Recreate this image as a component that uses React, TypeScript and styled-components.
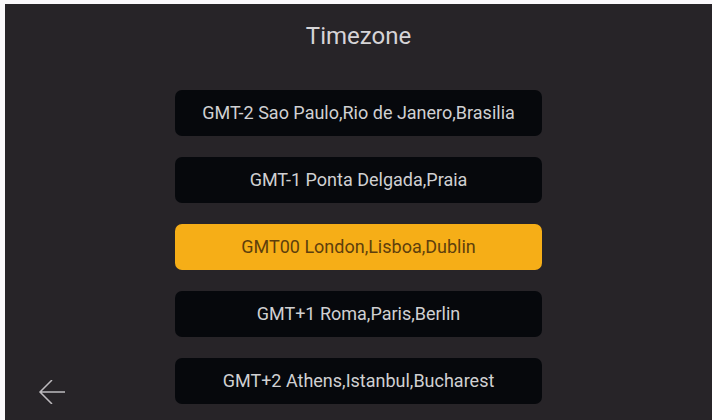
import React, { useState } from 'react';
import styled, { createGlobalStyle } from 'styled-components';

const GlobalStyle = createGlobalStyle`
  *, *::before, *::after { box-sizing: border-box; }
  body { margin: 0; background: #fbf9fc; }
`;

const Page = styled.div`
  min-height: 100vh;
  padding: 4px 0 0 5px;
  display: flex;
`;

const Screen = styled.main`
  flex: 1;
  display: grid;
  grid-template-columns: 1fr minmax(0, 52%) 1fr;
  grid-template-rows: auto 1fr;
  row-gap: 38px;
  padding: 16px 0;
  background: #272428;
  color: #d6d4d7;
  font-family: Roboto, 'Liberation Sans', sans-serif;
`;

const Title = styled.h1`
  grid-column: 1 / -1;
  margin: 0;
  text-align: center;
  font-size: 24px;
  line-height: 32px;
  font-weight: 400;
`;

const ZoneList = styled.ul`
  grid-column: 2;
  margin: 0;
  padding: 0;
  list-style: none;
  display: flex;
  flex-direction: column;
  gap: 21px;
`;

const ZoneButton = styled.button<{ $selected: boolean }>`
  display: block;
  width: 100%;
  padding: 11px 8px;
  border: 0;
  border-radius: 7px;
  background: ${({ $selected }) => ($selected ? '#f6ae17' : '#06080c')};
  color: ${({ $selected }) => ($selected ? '#5e3f0c' : '#d0d0d2')};
  font: inherit;
  font-size: 18px;
  line-height: 24px;
  text-align: center;
  cursor: pointer;
`;

const BackButton = styled.button`
  grid-column: 1;
  grid-row: 2;
  align-self: end;
  justify-self: start;
  display: flex;
  margin-left: 32px;
  padding: 0;
  border: 0;
  background: none;
  color: #bdbabe;
  cursor: pointer;
`;

const zones = [
  'GMT-2 Sao Paulo,Rio de Janero,Brasilia',
  'GMT-1 Ponta Delgada,Praia',
  'GMT00 London,Lisboa,Dublin',
  'GMT+1 Roma,Paris,Berlin',
  'GMT+2 Athens,Istanbul,Bucharest',
];

function BackArrow() {
  return (
    <svg width="32" height="24" viewBox="0 0 32 24" fill="none" stroke="currentColor" strokeWidth="1.5" aria-hidden="true">
      <path d="M28 12H3M15 0L3 12L15 24" />
    </svg>
  );
}

export default function App() {
  const [selected, setSelected] = useState(zones[2]);

  return (
    <>
      <GlobalStyle />
      <Page>
        <Screen>
          <Title>Timezone</Title>
          <BackButton type="button" aria-label="Back">
            <BackArrow />
          </BackButton>
          <ZoneList aria-label="Timezone">
            {zones.map((zone) => (
              <li key={zone}>
                <ZoneButton
                  type="button"
                  $selected={zone === selected}
                  aria-pressed={zone === selected}
                  onClick={() => setSelected(zone)}
                >
                  {zone}
                </ZoneButton>
              </li>
            ))}
          </ZoneList>
        </Screen>
      </Page>
    </>
  );
}
